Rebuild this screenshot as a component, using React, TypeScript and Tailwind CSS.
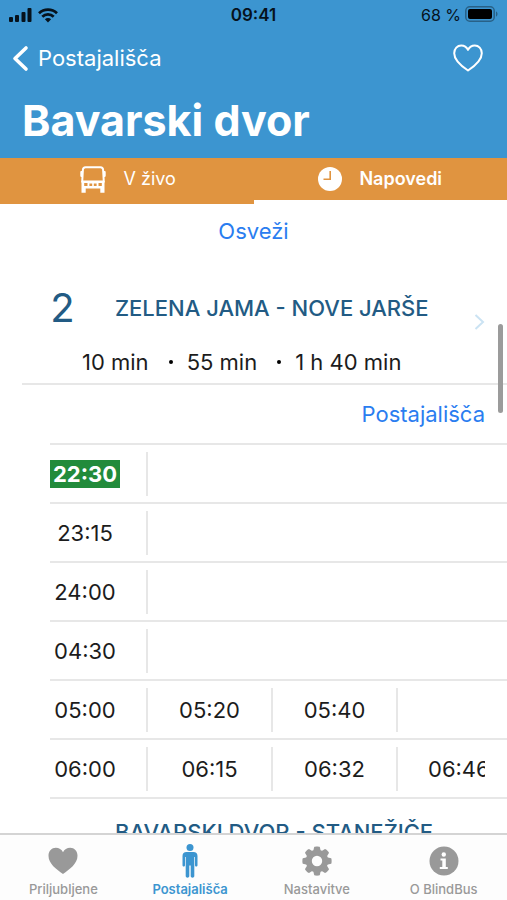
import { type ReactNode } from 'react';
import { clsx } from 'clsx';

const TIMETABLE = [
  ['22:30'],
  ['23:15'],
  ['24:00'],
  ['04:30'],
  ['05:00', '05:20', '05:40', ''],
  ['06:00', '06:15', '06:32', '06:46'],
];

const ARRIVALS = ['10 min', '55 min', '1 h 40 min'];

function StatusBar() {
  return (
    <div className="grid h-[30px] grid-cols-3 items-center px-[9px] text-[17px] leading-5 text-[#06121c]">
      <div className="flex items-center gap-[6px]">
        <svg width="23" height="15" viewBox="0 0 23 15" fill="currentColor" aria-hidden="true">
          <rect x="0" y="9" width="4" height="5" rx="1" />
          <rect x="6" y="7" width="4" height="7" rx="1" />
          <rect x="12.5" y="4" width="4" height="10" rx="1" />
          <rect x="18.5" y="0" width="4" height="14" rx="1" />
        </svg>
        <svg width="20" height="15" viewBox="0 0 20 15" aria-hidden="true">
          <path d="M1 5.3a12.8 12.8 0 0 1 18 0" fill="none" stroke="currentColor" strokeWidth="2.7" />
          <path d="M4.3 8.7a8 8 0 0 1 11.4 0" fill="none" stroke="currentColor" strokeWidth="2.7" />
          <path d="M6.9 11.3a4.4 4.4 0 0 1 6.2 0L10 14.6z" fill="currentColor" />
        </svg>
      </div>
      <span className="text-center font-semibold">09:41</span>
      <div className="flex items-center justify-end gap-1">
        <span className="text-base whitespace-nowrap">68 %</span>
        <svg width="33" height="16" viewBox="0 0 33 16" className="mb-[2px]" aria-hidden="true">
          <rect x="0.8" y="0.8" width="28.4" height="14.4" rx="4" fill="none" stroke="#286187" strokeWidth="1.5" />
          <rect x="3" y="3" width="24" height="10" rx="2" fill="#000" />
          <path d="M31 5.5c2 .6 2 4.400 0 5z" fill="#286187" />
        </svg>
      </div>
    </div>
  );
}

function Header() {
  return (
    <header className="h-[158px] shrink-0 bg-[#3c95d0] text-white">
      <StatusBar />
      <div className="flex h-14 items-center justify-between pr-6 pl-3">
        <a href="#postajalisca" className="flex items-center gap-[9px] text-[22px] leading-7">
          <svg width="17" height="27" viewBox="0 0 17 27" fill="none" stroke="currentColor" strokeWidth="3.6" strokeLinecap="round" strokeLinejoin="round" aria-hidden="true">
            <path d="M14 3 3 13.500 14 24" />
          </svg>
          Postajališča
        </a>
        <button type="button" aria-label="Dodaj med priljubljene">
          <svg width="30" height="28" viewBox="0 0 30 28" fill="none" stroke="currentColor" strokeWidth="2" strokeLinejoin="round" aria-hidden="true">
            <path d="M15 26.500C9 22.500 1.200 16.500 1.200 9.200 1.200 4.600 4.400 1.500 8.200 1.500c3 0 5.500 1.700 6.800 4.400 1.300-2.700 3.800-4.400 6.800-4.400 3.800 0 7 3.100 7 7.700 0 7.300-7.800 13.300-13.800 17.300z" />
          </svg>
        </button>
      </div>
      <h1 className="pl-[22px] text-[43px] leading-[68px] font-bold">Bavarski dvor</h1>
    </header>
  );
}

function BusIcon() {
  return (
    <svg width="26" height="27" viewBox="0 0 26 27" aria-hidden="true">
      <path d="M5.500 1.200h15c1.800 0 2.500 1 2.600 2.600l.7 11.800H2.200l.7-11.800c.1-1.600.8-2.600 2.600-2.600z" fill="none" stroke="currentColor" strokeWidth="2" />
      <path d="M2.600 5H1.500C.7 5 .3 5.500.3 6.200v3.600c0 .9.500 1.300 1.700 1.300zM23.400 5h1.100c.8 0 1.200.5 1.200 1.200v3.600c0 .9-.5 1.300-1.700 1.300z" fill="currentColor" />
      <path
        fill="currentColor"
        fillRule="evenodd"
        d="M1.500 15h23v11.700h-4.200v-4.200H5.700v4.200H1.500zm2.700 2v3h3.300v-3zm14.300 0v3h3.300v-3zM9.400 17.500v2.500h2.800v-2.500zm4.400 0v2.500h2.800v-2.500z"
      />
    </svg>
  );
}

function ClockIcon() {
  return (
    <svg width="24" height="24" viewBox="0 0 24 24" aria-hidden="true">
      <circle cx="12" cy="12" r="12" fill="currentColor" />
      <path d="M12.200 4v8.200H5.500" fill="none" stroke="#e09440" strokeWidth="1.600" />
    </svg>
  );
}

function Tab({ label, icon, active }: { label: string; icon: ReactNode; active?: boolean }) {
  return (
    <button
      type="button"
      role="tab"
      aria-selected={!!active}
      className={clsx(
        'flex items-center justify-center border-b-4 text-lg',
        active ? 'gap-[17px] border-white font-semibold' : 'gap-[18px] border-[#e09440] pl-[2px]',
      )}
    >
      {icon}
      {label}
    </button>
  );
}

function LineHeading({ number, name }: { number: string; name: string }) {
  return (
    <div className="flex h-14 items-center text-[#225b84]">
      <span
        className={clsx(
          'w-[81px] text-center',
          number.length > 1 ? 'self-end text-[28px] leading-7' : 'text-[40px] leading-10',
        )}
      >
        {number}
      </span>
      <h2 className="ml-[12px] text-[22px] leading-7 font-medium whitespace-nowrap">{name}</h2>
    </div>
  );
}

function Timetable() {
  return (
    <table className="w-full table-fixed border-collapse text-[22px] leading-7 text-[#1c1c1c]">
      <colgroup>
        <col className="w-[96px]" />
        <col className="w-[125px]" />
        <col className="w-[125px]" />
        <col />
      </colgroup>
      <tbody>
        {TIMETABLE.map(([hour, ...rest], index) => (
          <tr key={hour} className="h-[59px] border-y-2 border-[#e7e7e7]">
            <th scope="row" className="p-0 text-left font-normal">
              <span
                className={clsx(
                  'block w-[70px] text-center',
                  index === 0 && 'bg-[#228b3b] font-bold text-white',
                )}
              >
                {hour}
              </span>
            </th>
            {[0, 1, 2].map(column => {
              const time = rest[column];
              const hasDivider = column === 0 || time !== undefined;
              return (
                <td key={column} className="p-0">
                  <div
                    className={clsx(
                      'h-11 overflow-hidden leading-[44px] whitespace-nowrap',
                      hasDivider && 'border-l-2 border-[#e7e7e7]',
                      column === 2 ? 'mr-[22px] pl-[30px]' : 'text-center',
                    )}
                  >
                    {time}
                  </div>
                </td>
              );
            })}
          </tr>
        ))}
      </tbody>
    </table>
  );
}

function HeartIcon() {
  return (
    <svg width="30" height="28" viewBox="0 0 30 28" fill="currentColor" aria-hidden="true">
      <path d="M15 27C8.500 22.500.5 16.800.5 8.800.5 4 3.800.8 7.800.8c3.100 0 5.900 1.700 7.200 4.500C16.300 2.500 19.100.8 22.200.8c4 0 7.300 3.200 7.300 8 0 8-8 13.700-14.500 18.200z" />
    </svg>
  );
}

function PersonIcon() {
  return (
    <svg width="16" height="34" viewBox="0 0 16 34" fill="currentColor" aria-hidden="true">
      <circle cx="8" cy="3.500" r="3.500" />
      <path d="M4.500 8h7C14 8 15.500 9.500 15.500 12v9.200c0 1.800-2.500 1.800-2.500 0V13h-.7v19c0 2.200-3.600 2.200-3.600 0V21.500H7.300V32c0 2.200-3.600 2.200-3.600 0V13H3v8.200c0 1.800-2.500 1.800-2.500 0V12C.5 9.500 2 8 4.500 8z" />
    </svg>
  );
}

function GearIcon() {
  return (
    <svg width="30" height="30" viewBox="0 0 30 30" aria-hidden="true">
      <circle cx="15" cy="15" r="8.200" fill="none" stroke="currentColor" strokeWidth="6" />
      {[0, 45, 90, 135, 180, 225, 270, 315].map(angle => (
        <path key={angle} d="M11 6 12.200.9c.2-.7 5.400-.7 5.600 0L19 6z" fill="currentColor" transform={`rotate(${angle} 15 15)`} />
      ))}
    </svg>
  );
}

function InfoIcon() {
  return (
    <svg width="30" height="30" viewBox="0 0 30 30" aria-hidden="true">
      <circle cx="15" cy="15" r="14.500" fill="currentColor" />
      <circle cx="14.800" cy="8.500" r="2.200" fill="#fff" />
      <path d="M11.500 12.500h5.300v8.500h2v2h-8v-2h2.500v-6.500h-1.800z" fill="#fff" />
    </svg>
  );
}

const NAV_ITEMS = [
  { label: 'Priljubljene', icon: <HeartIcon /> },
  { label: 'Postajališča', icon: <PersonIcon />, active: true },
  { label: 'Nastavitve', icon: <GearIcon /> },
  { label: 'O BlindBus', icon: <InfoIcon /> },
];

export default function App() {
  return (
    <div className="flex h-screen flex-col overflow-hidden bg-white font-['Inter','Liberation_Sans',sans-serif]">
      <Header />
      <div role="tablist" className="grid h-[46px] shrink-0 grid-cols-2 bg-[#e09440] text-white">
        <Tab label="V živo" icon={<BusIcon />} />
        <Tab label="Napovedi" icon={<ClockIcon />} active />
      </div>

      <main className="relative min-h-0 flex-1 overflow-hidden">
        <button type="button" className="block h-[54px] w-full text-[22px] leading-7 text-[#2a7df0]">
          Osveži
        </button>

        <section className="mt-[22px] ml-[22px] flex items-center border-b-2 border-[#e7e7e7] pr-[22px]">
          <div className="flex-1">
            <LineHeading number="2" name="ZELENA JAMA - NOVE JARŠE" />
            <ul className="flex h-[47px] items-end pb-[7px] pl-[60px] text-[22px] leading-7 whitespace-nowrap text-[#1c1c1c]">
              {ARRIVALS.map((arrival, index) => (
                <li key={arrival} className="flex items-center">
                  {index > 0 && <span className="mr-[14px] ml-[20px] size-1 rounded-full bg-black" />}
                  {arrival}
                </li>
              ))}
            </ul>
          </div>
          <svg width="11" height="16" viewBox="0 0 11 16" fill="none" stroke="#cbe3f3" strokeWidth="2" className="mb-[20px]" aria-hidden="true">
            <path d="m1.500 1 7.500 7-7.500 7" />
          </svg>
        </section>

        <div className="flex h-[58px] items-center justify-end pr-[22px]">
          <a href="#postajalisca" className="text-[22px] leading-7 text-[#2a7df0]">
            Postajališča
          </a>
        </div>

        <div className="ml-[50px]">
          <Timetable />
        </div>

        <section className="mt-[5px] ml-[22px]">
          <LineHeading number="19B" name="BAVARSKI DVOR - STANEŽIČE" />
        </section>

        <div className="absolute top-[120px] right-1 h-[89px] w-[5px] rounded-full bg-[#9b9b9b]" />
      </main>

      <nav className="grid h-[67px] shrink-0 grid-cols-4 border-t-2 border-[#d4d4d4] bg-[#fdfdfd]">
        {NAV_ITEMS.map(({ label, icon, active }) => (
          <a
            key={label}
            href={`#${label}`}
            className={clsx(
              'flex flex-col items-center text-[13px] leading-4',
              active ? 'font-semibold text-[#3c95d0]' : 'font-medium text-[#999]',
            )}
          >
            <span className="flex h-[46px] items-center pt-[6px]">{icon}</span>
            {label}
          </a>
        ))}
      </nav>
    </div>
  );
}
